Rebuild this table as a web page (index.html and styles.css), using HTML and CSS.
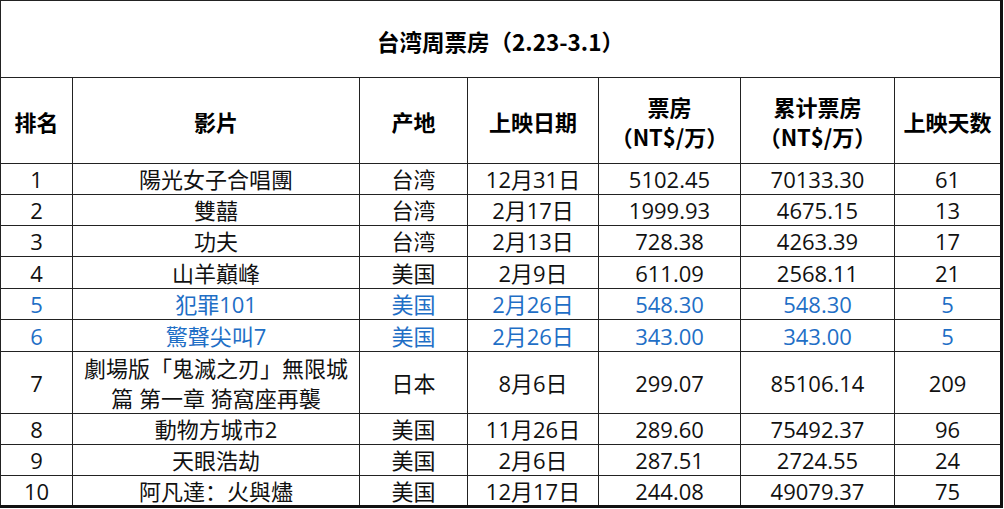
FILE: index.html
```html
<!DOCTYPE html>
<html lang="zh">
<head>
<meta charset="utf-8">
<link rel="stylesheet" href="styles.css">
</head>
<body>
<table class="bo">
  <colgroup>
    <col class="c1"><col class="c2"><col class="c3"><col class="c4"><col class="c5"><col class="c6"><col class="c7">
  </colgroup>
  <tr class="title-row"><td colspan="7" class="title">台湾周票房（2.23-3.1）</td></tr>
  <tr class="head-row">
    <th>排名</th><th>影片</th><th>产地</th><th>上映日期</th><th>票房<br>（NT$/万）</th><th>累计票房<br>（NT$/万）</th><th>上映天数</th>
  </tr>
  <tr class="row"><td>1</td><td>陽光女子合唱團</td><td>台湾</td><td>12月31日</td><td>5102.45</td><td>70133.30</td><td>61</td></tr>
  <tr class="row"><td>2</td><td>雙囍</td><td>台湾</td><td>2月17日</td><td>1999.93</td><td>4675.15</td><td>13</td></tr>
  <tr class="row"><td>3</td><td>功夫</td><td>台湾</td><td>2月13日</td><td>728.38</td><td>4263.39</td><td>17</td></tr>
  <tr class="row r32"><td>4</td><td>山羊巔峰</td><td>美国</td><td>2月9日</td><td>611.09</td><td>2568.11</td><td>21</td></tr>
  <tr class="row new"><td>5</td><td>犯罪101</td><td>美国</td><td>2月26日</td><td>548.30</td><td>548.30</td><td>5</td></tr>
  <tr class="row new r32"><td>6</td><td>驚聲尖叫7</td><td>美国</td><td>2月26日</td><td>343.00</td><td>343.00</td><td>5</td></tr>
  <tr class="row tall"><td>7</td><td>劇場版「鬼滅之刃」無限城<br>篇 第一章 猗窩座再襲</td><td>日本</td><td>8月6日</td><td>299.07</td><td>85106.14</td><td>209</td></tr>
  <tr class="row"><td>8</td><td>動物方城市2</td><td>美国</td><td>11月26日</td><td>289.60</td><td>75492.37</td><td>96</td></tr>
  <tr class="row"><td>9</td><td>天眼浩劫</td><td>美国</td><td>2月6日</td><td>287.51</td><td>2724.55</td><td>24</td></tr>
  <tr class="row last"><td>10</td><td>阿凡達：火與燼</td><td>美国</td><td>12月17日</td><td>244.08</td><td>49079.37</td><td>75</td></tr>
</table>
</body>
</html>
```

FILE: styles.css
```css
html, body {
  margin: 0;
  padding: 0;
  background: #ffffff;
}
.bo {
  border-collapse: collapse;
  table-layout: fixed;
  width: 1002px;
  font-family: "Open Sans", "Noto Sans CJK SC", sans-serif;
  font-size: 22px;
  color: #111111;
  border-right: 3px solid #111111;
  border-bottom: 3px solid #111111;
}
.c1 { width: 72px; }
.c2 { width: 287px; }
.c3 { width: 108px; }
.c4 { width: 131px; }
.c5 { width: 142px; }
.c6 { width: 154px; }
.c7 { width: 107px; }
.bo td, .bo th {
  border: 1px solid #222222;
  text-align: center;
  vertical-align: middle;
  padding: 0;
  line-height: 30px;
  white-space: nowrap;
}
.bo th {
  font-weight: 700;
  color: #000000;
  font-family: "Noto Sans CJK SC", "Open Sans", sans-serif;
}
.title-row { height: 77px; }
.bo .title {
  font-weight: 700;
  color: #000000;
  padding-top: 4px;
  font-size: 22.5px;
  font-family: "Noto Sans CJK SC", "Open Sans", sans-serif;
}
.head-row { height: 86px; }
.row { height: 31px; }
.row.r32 { height: 32px; }
.row td { line-height: 28px; }
.row.tall { height: 62px; }
.row.tall td { line-height: 30px; }
.row.new td { color: #1f6fc6; }
```
